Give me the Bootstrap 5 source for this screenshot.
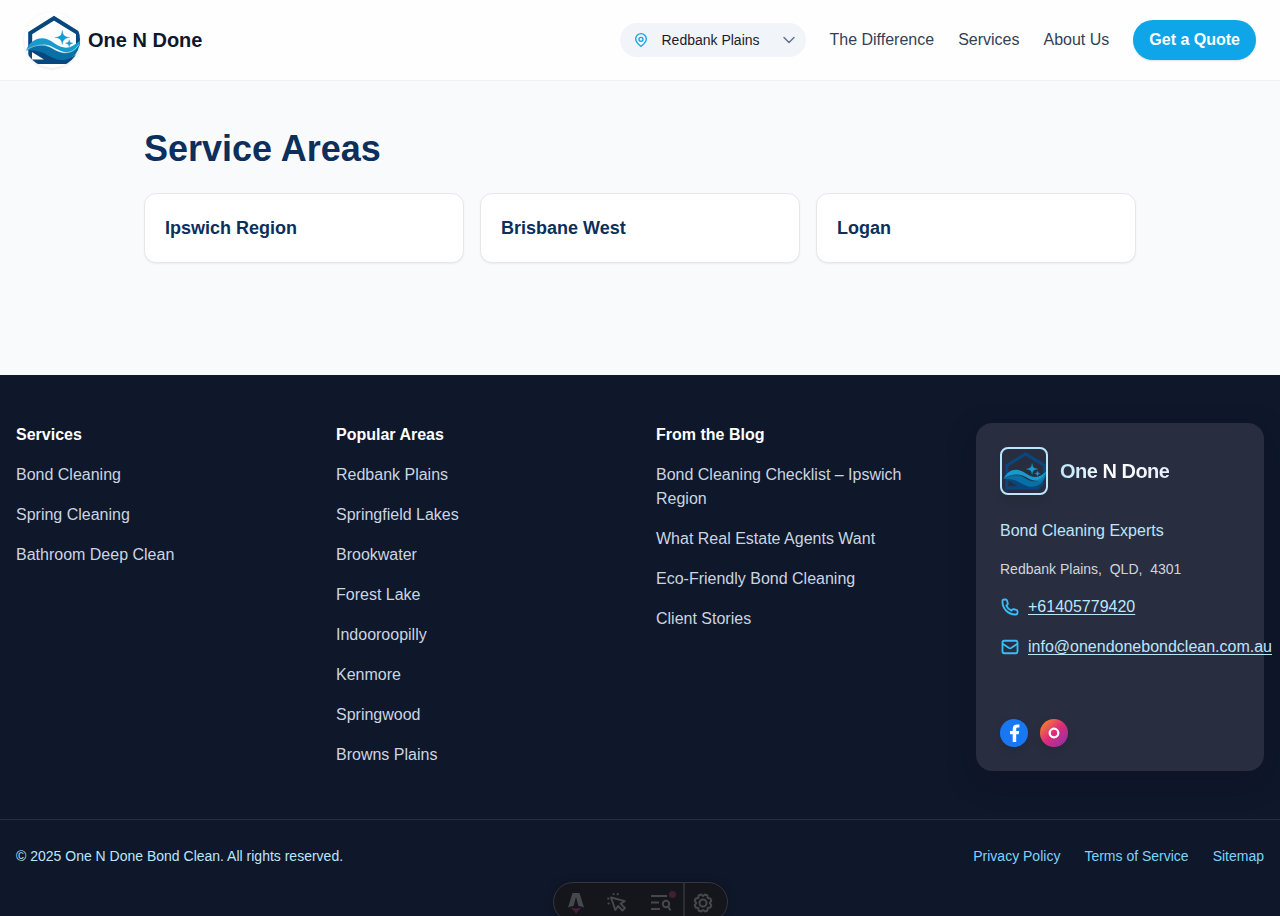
<!DOCTYPE html>
<html lang="en">
<head>
<meta charset="utf-8">
<meta name="viewport" content="width=device-width, initial-scale=1">
<title>Service Areas | One N Done</title>
<link href="https://cdn.jsdelivr.net/npm/bootstrap@5.3.0/dist/css/bootstrap.min.css" rel="stylesheet">
<style>
body{font-family:"Liberation Sans",Arial,sans-serif;background:#f9fafc;height:916px;overflow:hidden;color:#0f172a}
a{text-decoration:none}
svg{display:block;flex:none}
.site-header{height:81px;background:#fefefe;border-bottom:1px solid #eef1f5;padding:0 24px}
.logo-round{width:56px;height:56px;border-radius:50%;overflow:hidden;background:#fff;box-shadow:0 1px 3px rgba(0,0,0,.1);--foam:#fff}
.brand-name{font-size:20px;line-height:28px;font-weight:700;color:#0f172a}
.header-nav{gap:24px}
.header-nav>a{color:#334155}
.area-select{width:186px;height:34px;background:#f1f5f9;font-size:14px;padding:0 9px 0 13px;margin-right:-1px;color:#1e1b2e}
.btn-quote{--bs-btn-bg:#0ea5e9;--bs-btn-color:#fff;--bs-btn-border-width:0;--bs-btn-hover-bg:#0284c7;--bs-btn-hover-color:#fff;height:40px;padding:8px 16px;box-shadow:0 1px 2px rgba(0,0,0,.12)}
.header-nav>.btn-quote{color:#fff}
.areas{width:1024px;height:294px;padding:48px 16px 0}
.areas h1{font-size:36px;line-height:40px;color:#0c2f5b;margin-bottom:24px}
.region{border:1px solid #e5e7eb;border-radius:12px;padding:20px;box-shadow:0 1px 2px rgba(0,0,0,.06);font-size:18px;line-height:28px;color:#0c2f5b}
.site-footer{background:#0f172a;height:541px}
.footer-cols{--bs-gutter-x:32px;padding-top:48px;padding-bottom:48px}
.footer-cols h2{font-size:16px;line-height:24px;color:#fff;margin-bottom:16px}
.footer-links li{margin-bottom:16px}
.footer-links a{color:#cbd5e1}
.contact-panel{height:348px;border-radius:16px;padding:24px;background:#282e3f;box-shadow:0 10px 30px rgba(12,14,30,.33)}
.logo-square{width:48px;height:48px;border:2px solid #bae6fd;border-radius:8px;overflow:hidden;box-shadow:0 4px 10px rgba(0,0,0,.09);--foam:#282e3f}
.brand-shine{font-size:20px;line-height:28px;letter-spacing:-.5px;background:linear-gradient(90deg,#bae6fd,#fff 45%,#e9edff);-webkit-background-clip:text;background-clip:text;color:transparent}
.tagline,.contact-link{color:#bae6fd}
.contact-link a{color:inherit;text-decoration:underline;text-underline-offset:2px;white-space:nowrap}
.address{font-size:14px;line-height:20px;color:#d1d5db}
.social{width:28px;height:28px;border-radius:50%;overflow:hidden;box-shadow:0 4px 10px rgba(0,0,0,.1)}
.legal{border-top:1px solid #273043;font-size:14px;line-height:20px;padding:26px 16px 0;color:#bae6fd}
.legal a{color:#7dd3fc}
.dev-bar{bottom:-6px;left:552.5px;width:175px;height:40px;border:1px solid #343741;border-radius:20px;background:#14161c;box-shadow:0 0 8px rgba(0,0,0,.25);overflow:hidden;color:#46484d}
.dev-bar>span{display:flex;justify-content:center;align-items:center;height:40px}
</style>
</head>
<body>
<svg width="0" height="0" class="position-absolute" aria-hidden="true">
  <symbol id="house-wave" viewBox="0 0 56 56">
    <path d="M6.200 36V21L30 6.200 54 21v14" fill="none" stroke="#07477d" stroke-width="4"/>
    <path d="M4.300 37 8 38.500v9h12L8.700 40.500 4 38c8-3 15 1 21 5 8 5 17 7 29-2v3l-8 8H4.300Z" fill="#07477d"/>
    <path d="M2 38.500C10 30 20 31 28 36c9 6 18 8 28-5-1 11-9 17-18 17-12 0-18-12-36-9.500Z" fill="#0870a6"/>
    <path d="M2 38C8 25 20 23 30 31c10 7 17 6 26-2.500C55 38 48 41.500 42 40.500c-8-1-14-8-23-8-7 0-12 2-17 5.500Z" fill="#159bce"/>
    <path d="M3 37.700c8-5.500 18-6 26-1.200 9 5.500 18 7 26-4" fill="none" stroke="var(--foam)" stroke-width=".5"/>
    <path d="M38.300 18.500C39 23 39.800 24.700 45.500 25.500c-5.700.8-6.500 2.800-7.200 7-.7-4.200-1.500-6.200-7.200-7 5.700-.8 6.500-2.500 7.200-7ZM45.200 27.700c.4 2.300.9 3 3.600 3.500-2.700.5-3.200 1.300-3.600 3.600-.4-2.300-.9-3.100-3.600-3.600 2.700-.5 3.200-1.200 3.600-3.500Z" fill="#159bce" stroke="#159bce" stroke-width=".4"/>
  </symbol>
</svg>

<header class="site-header d-flex align-items-center justify-content-between">
  <a href="#" class="d-flex align-items-center gap-2">
    <span class="logo-round"><svg width="56" height="56"><use href="#house-wave"/></svg></span>
    <span class="brand-name">One N Done</span>
  </a>
  <nav class="header-nav d-flex align-items-center">
    <div class="area-select rounded-pill d-flex align-items-center">
      <svg width="16" height="16" viewBox="0 0 24 24" fill="none" stroke="#0ea5e9" stroke-width="2"><path d="M12 21.500c-2.500-2-8-5.800-8-11a8 8 0 0 1 16 0c0 5.200-5.500 9-8 11Z"/><circle cx="12" cy="11" r="3"/></svg>
      <span class="ms-2 ps-1">Redbank Plains</span>
      <svg class="ms-auto" width="16" height="16" viewBox="0 0 16 16" fill="none" stroke="#64748b" stroke-width="1.500" stroke-linecap="round" stroke-linejoin="round"><path d="m3 5.500 5 5 5-5"/></svg>
    </div>
    <a href="#">The Difference</a>
    <a href="#">Services</a>
    <a href="#">About Us</a>
    <a href="#" class="btn btn-quote rounded-pill fw-bold">Get a Quote</a>
  </nav>
</header>

<main class="areas mx-auto">
  <h1 class="fw-bold">Service Areas</h1>
  <div class="row gx-3">
    <div class="col-4"><div class="region bg-white fw-bold">Ipswich Region</div></div>
    <div class="col-4"><div class="region bg-white fw-bold">Brisbane West</div></div>
    <div class="col-4"><div class="region bg-white fw-bold">Logan</div></div>
  </div>
</main>

<footer class="site-footer">
  <div class="px-3">
    <div class="row footer-cols">
      <div class="col-3">
        <h2 class="fw-bold">Services</h2>
        <ul class="footer-links list-unstyled mb-0">
          <li><a href="#">Bond Cleaning</a></li><li><a href="#">Spring Cleaning</a></li><li><a href="#">Bathroom Deep Clean</a></li>
        </ul>
      </div>
      <div class="col-3">
        <h2 class="fw-bold">Popular Areas</h2>
        <ul class="footer-links list-unstyled mb-0">
          <li><a href="#">Redbank Plains</a></li><li><a href="#">Springfield Lakes</a></li><li><a href="#">Brookwater</a></li><li><a href="#">Forest Lake</a></li><li><a href="#">Indooroopilly</a></li><li><a href="#">Kenmore</a></li><li><a href="#">Springwood</a></li><li class="mb-0"><a href="#">Browns Plains</a></li>
        </ul>
      </div>
      <div class="col-3">
        <h2 class="fw-bold">From the Blog</h2>
        <ul class="footer-links list-unstyled mb-0">
          <li><a href="#">Bond Cleaning Checklist – Ipswich Region</a></li><li><a href="#">What Real Estate Agents Want</a></li><li><a href="#">Eco-Friendly Bond Cleaning</a></li><li><a href="#">Client Stories</a></li>
        </ul>
      </div>
      <div class="col-3">
        <div class="contact-panel d-flex flex-column">
          <div class="d-flex align-items-center mb-4">
            <span class="logo-square me-2"><svg width="44" height="44"><use href="#house-wave"/></svg></span>
            <span class="brand-shine fw-bold ms-1">One N Done</span>
          </div>
          <div class="tagline mb-3">Bond Cleaning Experts</div>
          <div class="address mb-3">Redbank Plains, &nbsp;QLD, &nbsp;4301</div>
          <div class="contact-link d-flex align-items-center gap-2 mb-3">
            <svg width="20" height="20" viewBox="0 0 24 24" fill="none" stroke="#38bdf8" stroke-width="2.200" stroke-linejoin="round"><path d="M3 5a2 2 0 0 1 2-2h1.600a2 2 0 0 1 1.900 1.500l.8 3a2 2 0 0 1-.7 2l-1 .8a12 12 0 0 0 6.100 6.100l.8-1a2 2 0 0 1 2-.7l3 .8a2 2 0 0 1 1.500 1.900V19a2 2 0 0 1-2 2h-1C10 21 3 14 3 6Z"/></svg>
            <a href="#">+61405779420</a>
          </div>
          <div class="contact-link d-flex align-items-center gap-2">
            <svg width="20" height="20" viewBox="0 0 24 24" fill="none" stroke="#38bdf8" stroke-width="2.200" stroke-linejoin="round"><rect x="3" y="4.500" width="18" height="15" rx="2"/><path d="m3 8 7.900 5.200a2.300 2.300 0 0 0 2.400 0L21 8"/></svg>
            <a href="#">info@onendonebondclean.com.au</a>
          </div>
          <div class="d-flex mt-auto">
            <a href="#" class="social me-2" aria-label="Facebook"><svg width="28" height="28" viewBox="0 0 28 28"><path d="M0 0h28v28H0Z" fill="#1877f2"/><path d="M12.700 23v-7.700H10v-3.300h2.700V10c0-3.200 1.700-4.600 4.700-4.600.9 0 1.600.1 2 .2v2.800h-1.400c-1.400 0-1.800.6-1.800 1.700V12h3l-.5 3.300h-2.500V23Z" fill="#fff"/></svg></a>
            <a href="#" class="social ms-1" aria-label="Instagram"><svg width="28" height="28" viewBox="0 0 28 28"><defs><linearGradient id="insta" x1="0" y1="0" x2="1" y2="1"><stop offset=".08" stop-color="#f58529"/><stop offset=".5" stop-color="#dd2a7b"/><stop offset="1" stop-color="#8134af"/></linearGradient></defs><path d="M0 0h28v28H0Z" fill="url(#insta)"/><circle cx="14" cy="14" r="4.300" fill="none" stroke="#fff" stroke-width="2.300"/></svg></a>
          </div>
        </div>
      </div>
    </div>
  </div>
  <div class="legal d-flex justify-content-between">
    <div>© 2025 One N Done Bond Clean. All rights reserved.</div>
    <div class="d-flex gap-4"><a href="#">Privacy Policy</a><a href="#">Terms of Service</a><a href="#">Sitemap</a></div>
  </div>
</footer>

<div class="dev-bar position-fixed d-flex">
  <span style="width:45px"><svg width="20" height="22" viewBox="0 0 20 22"><path d="M6.500 1h7L18 15.500c-2-.8-3.700-1.200-5.500-1.400L10 5 7.500 14.100c-1.800.2-3.500.6-5.500 1.400Z" fill="currentColor"/><path d="M5.500 15.500c2.500 1.400 6.500 1.400 9 0 0 2.500-2 3-3 4L10 22l-1.500-3c-1.300-.9-2.700-1-3-3.500Z" fill="#452040"/></svg></span>
  <span style="width:37px"><svg width="22" height="22" viewBox="0 0 22 22" fill="none" stroke="currentColor" stroke-width="1.900" stroke-linejoin="round"><path d="m5 5.500 4.300 12.500 2.800-4 4.300 4.500 2.600-2.500-4.400-4.400 4.200-2.400ZM1.300 6.500l2 .3M1.700 12l1.900-1M7.300 1.200 7.800 3M12.300 1.200l-1.200 1.800"/></svg></span>
  <span class="position-relative" style="width:47px"><svg style="margin-left:6px" width="24" height="22" viewBox="0 0 24 22" fill="none" stroke="currentColor" stroke-width="2"><path d="M1 4h16M1 10.500h8M1 17h9"/><circle cx="16" cy="12" r="3.200"/><path d="m18 14.500 2.500 4"/></svg><svg class="position-absolute" style="left:33px;top:8px" width="7" height="7"><circle cx="3.500" cy="3.500" r="3.500" fill="#40202f"/></svg></span>
  <span style="width:39px;border-left:2px solid #2c2e36"><svg width="22" height="22" viewBox="0 0 22 22" fill="none" stroke="currentColor" stroke-width="2" stroke-linejoin="round"><path d="m9 2.500 2 1.500 2-1.500 2.400 1 .3 2.600 2.600.3 1 2.400L17.700 11l1.600 2.200-1 2.400-2.600.3-.3 2.600-2.400 1-2-1.500-2 1.500-2.400-1-.3-2.600-2.600-.3-1-2.400L4.300 11 2.700 8.800l1-2.400 2.600-.3.300-2.600Z"/><circle cx="11" cy="11" r="3.500"/></svg></span>
</div>
<script src="https://cdn.jsdelivr.net/npm/bootstrap@5.3.0/dist/js/bootstrap.bundle.min.js"></script>
</body>
</html>
